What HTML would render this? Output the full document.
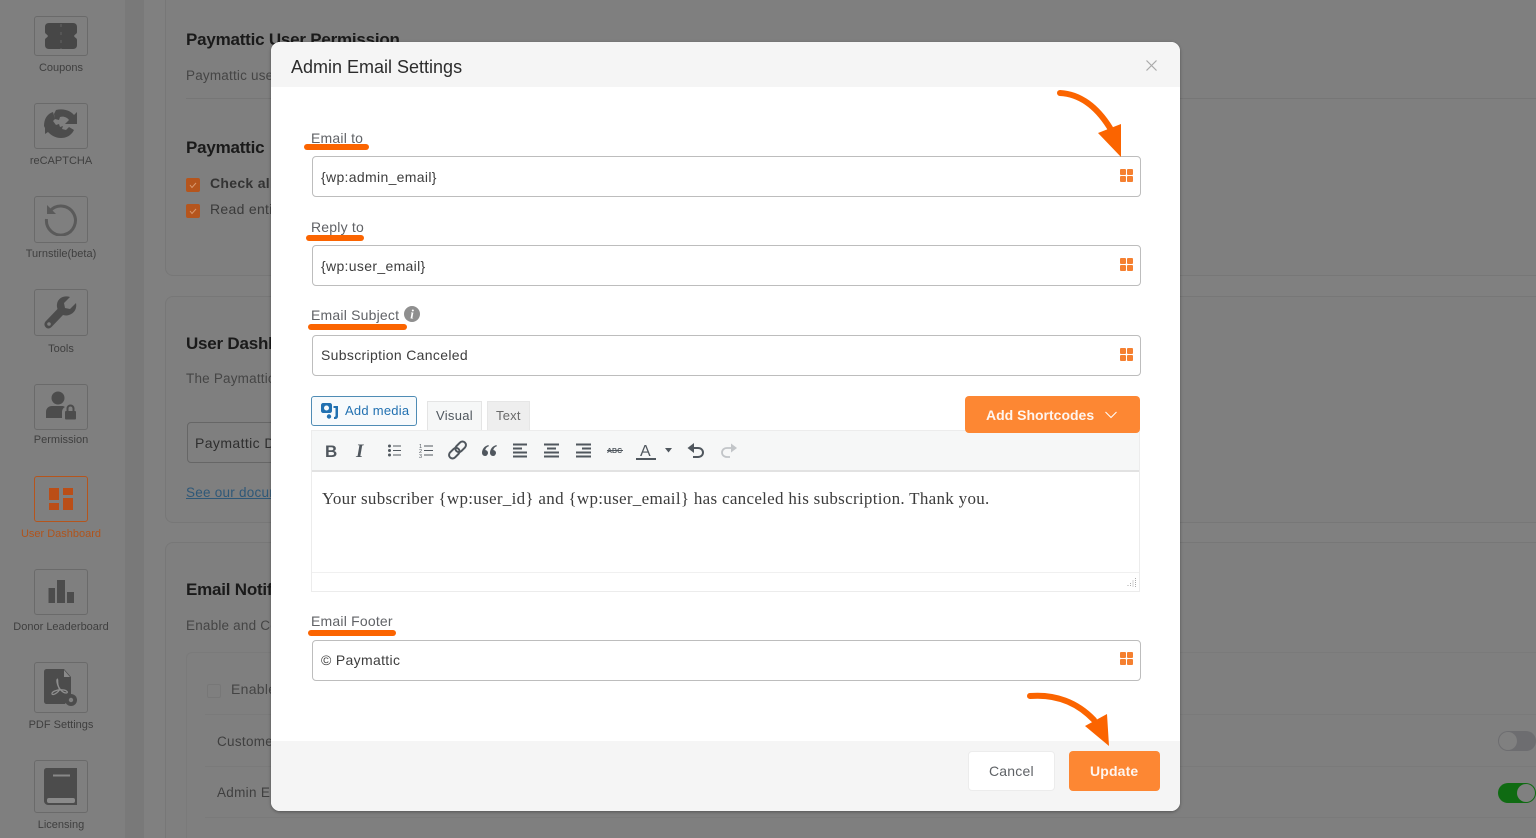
<!DOCTYPE html>
<html lang="en"><head><meta charset="utf-8"><title>Admin Email Settings</title>
<style>
*{box-sizing:border-box}
html,body{margin:0;padding:0;width:1536px;height:838px;overflow:hidden;background:#808080}
body{font-family:"Liberation Sans",sans-serif}
#w{position:relative;width:1536px;height:838px;overflow:hidden;contain:paint}
.a{position:absolute}
.t{position:absolute;white-space:nowrap;line-height:1}
.sb{position:absolute;left:34px;width:54px;border:1px solid #6a6a6a;border-radius:3px}
.sl{position:absolute;left:0;width:122px;text-align:center;font-size:11px;line-height:12px;color:#3f3f3f}
.h{font-weight:700;font-size:17px;color:#1a1a1a;letter-spacing:-.22px}
.p{font-size:13.5px;color:#454545;letter-spacing:.2px}
.card{position:absolute;left:165px;width:1371px;border:1px solid #777;border-right:none;border-radius:8px 0 0 8px;background:#7f7f7f}
.lb{position:absolute;left:311px;font-size:14px;color:#606266;letter-spacing:.2px;line-height:16px;white-space:nowrap}
.ul{position:absolute;height:6px;border-radius:3px;background:#fb6400}
.in{position:absolute;left:312px;width:829px;height:41px;border:1px solid #bdbdbd;border-radius:4px;background:#fff;font-size:14px;color:#3d3d3d;line-height:39px;padding-left:8px;letter-spacing:.33px}
.gi{position:absolute;left:1120px;width:13px;height:13px}
.gi i{position:absolute;width:5.5px;height:5.5px;background:#f58030;border-radius:1px}
.gi i:nth-child(1){left:0;top:0}.gi i:nth-child(2){left:7px;top:0}.gi i:nth-child(3){left:0;top:7px}.gi i:nth-child(4){left:7px;top:7px}
</style></head><body><div id="w">
<div class="a" style="left:0;top:0;width:125px;height:838px;background:#7f7f7f"></div>
<div class="a" style="left:125px;top:0;width:19px;height:838px;background:#797979"></div>

<!-- sidebar -->
<div class="sb" style="top:16px;height:40px"></div>
<svg class="a" style="left:44px;top:22px" width="34" height="28" viewBox="0 0 34 28"><path fill="#474747" d="M5 1h24c3 0 4 2 4 4v5c0 2-2 2-3 4 1 2 3 2 3 4v5c0 2-1 4-4 4H5c-3 0-4-2-4-4v-5c0-2 2-2 3-4-1-2-3-2-3-4V5c0-2 1-4 4-4z"/><path stroke="#636363" stroke-width="1" stroke-dasharray="3 5" fill="none" d="M17 2v25"/></svg>
<div class="sl" style="top:62px">Coupons</div>

<div class="sb" style="top:103px;height:46px"></div>
<svg class="a" style="left:44px;top:109px" width="34" height="33" viewBox="0 0 34 33"><path fill="#4c4c4c" d="M12 1C20-1 27 2 30 6l3-3v12H21l4-4c-2-3-6-4-9-3l-1 3-4-1-1-5zM1 19 0 17C0 10 3 5 9 3l2 7-2 2 3 4 3-1 1 3 3-1-1 3 4 1 3-3 5 3c-3 6-8 8-13 8-6 0-10-3-13-6l-3 2z"/></svg>
<div class="sl" style="top:155px">reCAPTCHA</div>

<div class="sb" style="top:196px;height:47px"></div>
<svg class="a" style="left:44px;top:202px" width="34" height="34" viewBox="0 0 34 34"><path fill="none" stroke="#5a5a5a" stroke-width="3" d="M6 9A14.500 14.500 0 1 1 2.500 17"/><path fill="#5a5a5a" d="M3 3v9h9z"/></svg>
<div class="sl" style="top:248px">Turnstile(beta)</div>

<div class="sb" style="top:289px;height:47px"></div>
<svg class="a" style="left:44px;top:296px" width="34" height="34" viewBox="0 0 34 34"><path fill="#4c4c4c" d="M32 7l-6 6-5-1-1-5 6-6C20-1 14 2 13 8c-.3 2 0 3 .5 5L2 25c-2 2-2 4-.5 6s4 2 6 0L19 19c2 .5 4 .7 6 0 6-2 8-7 7-12z"/><circle cx="5" cy="28" r="1.800" fill="#7f7f7f"/></svg>
<div class="sl" style="top:343px">Tools</div>

<div class="sb" style="top:384px;height:46px"></div>
<svg class="a" style="left:44px;top:391px" width="34" height="34" viewBox="0 0 34 34"><circle cx="14" cy="7" r="6.500" fill="#4c4c4c"/><path fill="#4c4c4c" d="M2 27v-6c0-4 3-6 6-6h11l2 1c-2 1-3 3-3 5v6z"/><rect x="21" y="20" width="11" height="8.500" rx="1" fill="#4c4c4c"/><path fill="none" stroke="#4c4c4c" stroke-width="2" d="M23.500 20v-2.500a3 3 0 0 1 6 0V20"/></svg>
<div class="sl" style="top:434px">Permission</div>

<div class="sb" style="top:476px;height:46px;border-color:#b5551d"></div>
<svg class="a" style="left:49px;top:487px" width="25" height="24" viewBox="0 0 25 24"><path fill="#bb4e17" d="M0 1h10v12H0zM14 1h10v7H14zM14 11h10v12H14zM0 16h10v7H0z"/></svg>
<div class="sl" style="top:528px;color:#b0541c">User Dashboard</div>

<div class="sb" style="top:569px;height:46px"></div>
<svg class="a" style="left:48px;top:580px" width="26" height="25" viewBox="0 0 26 25"><path fill="#4c4c4c" d="M.5 8h6.500v15H.5zM9 0h8v23H9zM19 12h7v11h-7z"/></svg>
<div class="sl" style="top:621px">Donor Leaderboard</div>

<div class="sb" style="top:662px;height:51px"></div>
<svg class="a" style="left:44px;top:668px" width="36" height="38" viewBox="0 0 36 38"><path fill="#4c4c4c" d="M3 1h17l7 8v18l-6 9H3c-2 0-3-1-3-3V4c0-2 1-3 3-3z"/><path fill="#8a8a8a" d="M20 2l6 7h-6z"/><path fill="none" stroke="#8f8f8f" stroke-width="1.300" d="M14 11c-2 0-1 5 1 9 2 3-6 8-7 6s5-5 12-4c4 1 4 3 2 3-3 0-7-4-8-8-.5-3-.5-6 0-6z"/><circle cx="27" cy="32" r="6" fill="#4c4c4c"/><circle cx="27" cy="32" r="2.200" fill="#808080"/></svg>
<div class="sl" style="top:719px">PDF Settings</div>

<div class="sb" style="top:760px;height:53px"></div>
<svg class="a" style="left:44px;top:767px" width="34" height="39" viewBox="0 0 34 39"><path fill="#4c4c4c" d="M3 1h30v37H4c-2 0-4-2-4-4V4c0-2 1-3 3-3z"/><rect x="9" y="7.500" width="17" height="2" fill="#888"/><rect x="3" y="31" width="28" height="5" rx="2" fill="#8a8a8a"/></svg>
<div class="sl" style="top:819px">Licensing</div>

<!-- background cards -->
<div class="card" style="top:-30px;height:306px"></div>
<div class="a" style="left:186px;top:98px;width:1350px;height:1px;background:#767676"></div>
<div class="card" style="top:296px;height:227px"></div>
<div class="card" style="top:542px;height:296px;border-bottom:none;border-radius:8px 0 0 0"></div>
<div class="a" style="left:186px;top:652px;width:1350px;height:186px;border:1px solid #7a7a7a;border-right:none;border-bottom:none;border-radius:6px 0 0 0"></div>
<div class="a" style="left:205px;top:714px;width:1331px;height:1px;background:#7a7a7a"></div>
<div class="a" style="left:205px;top:766px;width:1331px;height:1px;background:#7a7a7a"></div>
<div class="a" style="left:205px;top:817px;width:1331px;height:1px;background:#7a7a7a"></div>

<div class="t h" style="left:186px;top:31px">Paymattic User Permission</div>
<div class="t p" style="left:186px;top:69px">Paymattic user</div>
<div class="t h" style="left:186px;top:139px">Paymattic</div>
<div class="a" style="left:186px;top:178px;width:14px;height:14px;background:#b5551d;border-radius:2px"></div>
<div class="a" style="left:186px;top:204px;width:14px;height:14px;background:#b5551d;border-radius:2px"></div>
<svg class="a" style="left:186px;top:178px" width="14" height="40" viewBox="0 0 14 40"><path d="M4 7l2 2.500 4-4.500M4 33l2 2.500 4-4.500" stroke="#d99a70" stroke-width="1" fill="none"/></svg>
<div class="t" style="left:210px;top:176px;font-size:14px;font-weight:700;color:#333;letter-spacing:.3px">Check all</div>
<div class="t" style="left:210px;top:202px;font-size:14px;color:#3a3a3a;letter-spacing:.3px">Read entire</div>
<div class="t h" style="left:186px;top:335px">User Dashboard</div>
<div class="t p" style="left:186px;top:372px">The Paymattic</div>
<div class="a" style="left:187px;top:422px;width:120px;height:41px;border:1px solid #666;border-radius:4px"></div>
<div class="t" style="left:195px;top:436px;font-size:14px;color:#2e2e2e;letter-spacing:.4px">Paymattic Dashboard</div>
<div class="t" style="left:186px;top:486px;font-size:13.5px;color:#2f5878;letter-spacing:.25px;text-decoration:underline">See our documentation</div>
<div class="t h" style="left:186px;top:581px">Email Notifications</div>
<div class="t p" style="left:186px;top:619px">Enable and Configure</div>
<div class="a" style="left:207px;top:684px;width:14px;height:14px;border:1px solid #777;border-radius:2px"></div>
<div class="t" style="left:231px;top:682px;font-size:14px;color:#444;letter-spacing:.3px">Enable</div>
<div class="t" style="left:217px;top:735px;font-size:13.5px;color:#3f3f3f;letter-spacing:.3px">Customer</div>
<div class="t" style="left:217px;top:786px;font-size:13.5px;color:#3f3f3f;letter-spacing:.3px">Admin Email</div>

<div class="a" style="left:1498px;top:731px;width:38px;height:20px;border-radius:10px;background:#6d6d70"></div>
<div class="a" style="left:1499px;top:732px;width:18px;height:18px;border-radius:50%;background:#808080"></div>
<div class="a" style="left:1498px;top:783px;width:38px;height:20px;border-radius:10px;background:#0f6b12"></div>
<div class="a" style="left:1517px;top:784px;width:18px;height:18px;border-radius:50%;background:#808080"></div>

<!-- modal -->
<div class="a" style="left:271px;top:42px;width:909px;height:769px;background:#fff;border-radius:9px;overflow:hidden;box-shadow:0 1px 3px rgba(0,0,0,.35)">
  <div class="a" style="left:0;top:0;width:909px;height:45px;background:#f5f5f5"></div>
  <div class="a" style="left:0;top:699px;width:909px;height:70px;background:#f5f5f5"></div>
</div>
<div class="t" style="left:291px;top:58px;font-size:18px;color:#2c2c2c">Admin Email Settings</div>
<svg class="a" style="left:1146px;top:60px" width="11" height="11" viewBox="0 0 11 11"><path d="M.5.500l10 10M10.500.500l-10 10" stroke="#a9a9a9" stroke-width="1.200" fill="none"/></svg>

<div class="lb" style="top:130px">Email to</div>
<div class="ul" style="left:304px;top:144px;width:65px"></div>
<div class="in" style="top:156px;line-height:41px">{wp:admin_email}</div>
<div class="gi" style="top:169px"><i></i><i></i><i></i><i></i></div>

<div class="lb" style="top:219px">Reply to</div>
<div class="ul" style="left:306px;top:235px;width:58px"></div>
<div class="in" style="top:245px;line-height:41px">{wp:user_email}</div>
<div class="gi" style="top:258px"><i></i><i></i><i></i><i></i></div>

<div class="lb" style="top:307px">Email Subject</div>
<svg class="a" style="left:404px;top:306px" width="16" height="16" viewBox="0 0 16 16"><circle cx="8" cy="8" r="8" fill="#8f8f8f"/><text x="8" y="12.500" text-anchor="middle" font-family="Liberation Serif,serif" font-style="italic" font-weight="700" font-size="13" fill="#fff">i</text></svg>
<div class="ul" style="left:308px;top:324px;width:99px"></div>
<div class="in" style="top:335px">Subscription Canceled</div>
<div class="gi" style="top:348px"><i></i><i></i><i></i><i></i></div>

<!-- editor -->
<div class="a" style="left:311px;top:396px;width:106px;height:30px;border:1px solid #4f8cb5;border-radius:3px;background:#f7fafc"></div>
<svg class="a" style="left:320px;top:402px" width="19" height="18" viewBox="0 0 19 18"><path fill="#2271b1" d="M3 1h7c1 0 2 1 2 2v6c0 1-1 2-2 2H3c-1 0-2-1-2-2V3c0-1 1-2 2-2z"/><circle cx="6.500" cy="6" r="2.500" fill="#f7fafc"/><path fill="#2271b1" d="M13.500 4H18v10c0 2-1 3-3 3h-1v-2c1 0 1.500-.5 1.500-1.500V6h-2z"/><circle cx="9" cy="14.500" r="2.200" fill="#2271b1"/></svg>
<div class="t" style="left:345px;top:404px;font-size:13px;color:#2271b1;letter-spacing:.25px">Add media</div>
<div class="a" style="left:427px;top:401px;width:55px;height:30px;background:#f6f7f7;border:1px solid #e4e4e4;border-bottom:none"></div>
<div class="t" style="left:436px;top:409px;font-size:13px;color:#50575e;letter-spacing:.3px">Visual</div>
<div class="a" style="left:487px;top:401px;width:43px;height:29px;background:#eeeeee;border:1px solid #e6e6e6;border-bottom:none"></div>
<div class="t" style="left:496px;top:409px;font-size:13px;color:#6a6a6a;letter-spacing:.2px">Text</div>

<div class="a" style="left:311px;top:430px;width:829px;height:162px;border:1px solid #ececec;background:#fff"></div>
<div class="a" style="left:312px;top:431px;width:827px;height:41px;background:#f6f7f7;border-bottom:2px solid #e2e2e2"></div>
<div class="a" style="left:312px;top:572px;width:827px;height:1px;background:#f0f0f0"></div>
<svg class="a" style="left:1126px;top:577px" width="10" height="10" viewBox="0 0 10 10"><path d="M9.500 1v9M7 3.500V10M4.500 6v4M2 8v2" stroke="#aaa" stroke-width="1" stroke-dasharray="1 1" fill="none"/></svg>
<div class="a" style="left:965px;top:396px;width:175px;height:37px;background:#fd8733;border-radius:4px"></div>
<div class="t" style="left:986px;top:408px;font-size:14px;font-weight:700;color:#fff;opacity:.92">Add Shortcodes</div>
<svg class="a" style="left:1105px;top:411px" width="12" height="8" viewBox="0 0 12 8"><path d="M.5 1l5.500 5.500L11.500 1" stroke="#fff" stroke-width="1" fill="none"/></svg>

<!-- toolbar icons -->
<svg class="a" style="left:320px;top:438px" width="420" height="26" viewBox="0 0 420 26">
 <g fill="#50575e" stroke="none">
  <text x="5" y="19" font-family="Liberation Sans,sans-serif" font-weight="700" font-size="17">B</text>
  <text x="36" y="19" font-family="Liberation Serif,serif" font-weight="700" font-style="italic" font-size="19">I</text>
  <circle cx="69.500" cy="8" r="1.500"/><circle cx="69.500" cy="12.500" r="1.500"/><circle cx="69.500" cy="17" r="1.500"/>
  <path d="M73 7.500h8v1h-8zM73 12h8v1h-8zM73 16.500h8v1h-8z"/>
  <text x="99" y="10" font-size="5.500" font-family="Liberation Sans,sans-serif">1</text><text x="99" y="15" font-size="5.500" font-family="Liberation Sans,sans-serif">2</text><text x="99" y="20" font-size="5.500" font-family="Liberation Sans,sans-serif">3</text>
  <path d="M104 7.500h9v1h-9zM104 12h9v1h-9zM104 16.500h9v1h-9z"/>
  <path d="M168.500 7c-4 1-6.500 4-6.500 8a3 3 0 1 0 3.300-3c.2-1.500 1.400-3 3.500-3.700zM176.500 7c-4 1-6.500 4-6.500 8a3 3 0 1 0 3.300-3c.2-1.500 1.400-3 3.500-3.700z"/>
  <path d="M193 5.500h14v2h-14zM193 9.500h9v2h-9zM193 13.500h14v2h-14zM193 17.500h14v2h-14z"/>
  <path d="M224 5.500h15v2h-15zM227 9.500h9v2h-9zM224 13.500h15v2h-15zM224 17.500h15v2h-15z"/>
  <path d="M256 5.500h15v2h-15zM262 9.500h9v2h-9zM256 13.500h15v2h-15zM256 17.500h15v2h-15z"/>
  <text x="287" y="15" font-size="7" font-weight="700" font-family="Liberation Sans,sans-serif">ABC</text>
  <path d="M287 12h16v1h-16z"/>
  <text x="320" y="18" font-size="16" font-family="Liberation Sans,sans-serif">A</text>
  <rect x="316" y="20" width="20" height="2"/>
  <path d="M345 10h7l-3.500 4.500z"/>
 </g>
 <g fill="none" stroke="#50575e" stroke-width="2">
  <g transform="rotate(-45 137.500 12)"><rect x="127" y="8.500" width="12" height="7" rx="3.500"/><rect x="136" y="8.500" width="12" height="7" rx="3.500"/></g>
  <path d="M371 10h7c3 0 5 2 5 4.500S381 19 378 19h-5"/>
 </g>
 <path fill="#50575e" d="M374 5v10l-6.500-5z"/>
 <path fill="none" stroke="#c2c5c8" stroke-width="1.800" d="M414 10h-7c-3 0-5 2-5 4.500s2 4.500 5 4.500h3"/>
 <path fill="#c2c5c8" d="M411 5.500v9l6-4.500z"/>
</svg>

<div class="t" style="left:322px;top:490px;font-family:'Liberation Serif',serif;font-size:17px;color:#3c3c3c;letter-spacing:.3px">Your subscriber {wp:user_id} and {wp:user_email} has canceled his subscription. Thank you.</div>

<div class="lb" style="top:613px">Email Footer</div>
<div class="ul" style="left:308px;top:630px;width:88px"></div>
<div class="in" style="top:640px">© Paymattic</div>
<div class="gi" style="top:652px"><i></i><i></i><i></i><i></i></div>

<div class="a" style="left:968px;top:751px;width:87px;height:40px;background:#fff;border:1px solid #ececec;border-radius:4px"></div>
<div class="t" style="left:989px;top:764px;font-size:14px;color:#5f6266;letter-spacing:.2px">Cancel</div>
<div class="a" style="left:1069px;top:751px;width:91px;height:40px;background:#fd8733;border-radius:4px"></div>
<div class="t" style="left:1090px;top:764px;font-size:14px;font-weight:700;color:#fff;opacity:.92;letter-spacing:.15px">Update</div>

<!-- arrows -->
<svg class="a" style="left:1050px;top:85px" width="80" height="75" viewBox="0 0 80 75"><path d="M10 8C30 9 47 22 60 43" fill="none" stroke="#fb6400" stroke-width="6" stroke-linecap="round"/><path d="M71 39v33L48 48z" fill="#fb6400"/></svg>
<svg class="a" style="left:1020px;top:685px" width="95" height="65" viewBox="0 0 95 65"><path d="M10 11C35 9 57 17 74 35" fill="none" stroke="#fb6400" stroke-width="6" stroke-linecap="round"/><path d="M87 29l2 32-24-20z" fill="#fb6400"/></svg>
</div></body></html>
